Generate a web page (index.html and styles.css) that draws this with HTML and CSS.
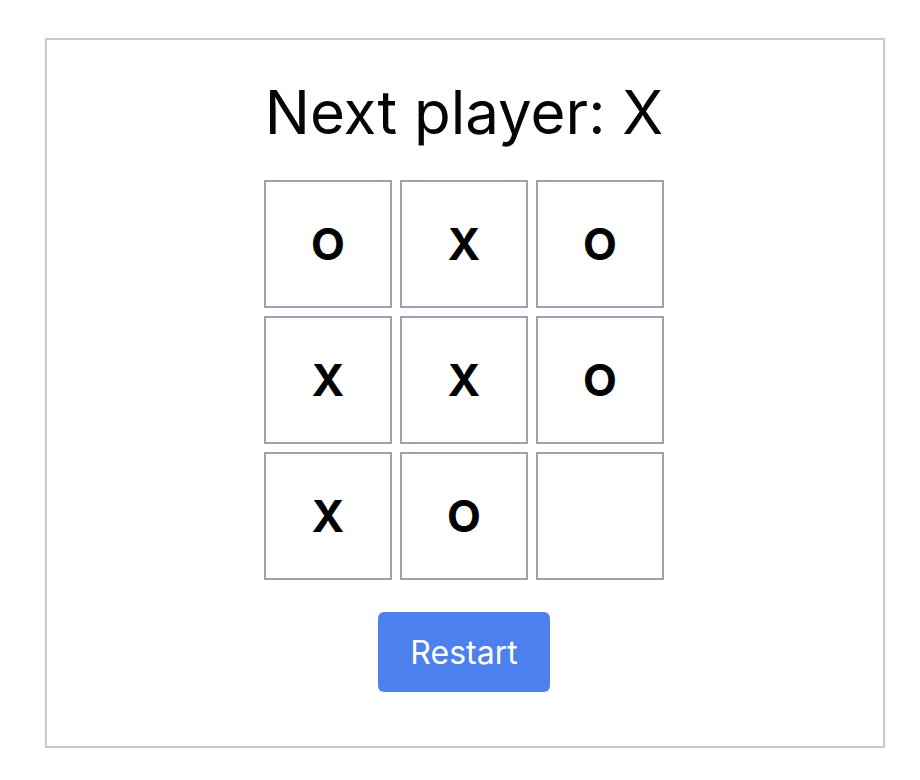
FILE: index.html
```html
<!DOCTYPE html>
<html lang="en">
<head>
<meta charset="utf-8">
<title>Tic Tac Toe</title>
<link rel="stylesheet" href="styles.css">
</head>
<body>
<div class="game">
  <h1 class="status">Next player: X</h1>
  <div class="board">
    <button class="cell">O</button>
    <button class="cell">X</button>
    <button class="cell">O</button>
    <button class="cell">X</button>
    <button class="cell">X</button>
    <button class="cell">O</button>
    <button class="cell">X</button>
    <button class="cell">O</button>
    <button class="cell"></button>
  </div>
  <button class="restart">Restart</button>
</div>
</body>
</html>
```
FILE: styles.css
```css
html, body {
  margin: 0;
  padding: 0;
  background: #ffffff;
}
body {
  font-family: Inter, "Noto Sans", sans-serif;
  color: #000000;
  padding: 38px 0 0 45px;
}
.game {
  box-sizing: border-box;
  width: 840px;
  height: 710px;
  border: 2px solid #c9c9c9;
  box-shadow: 0 1px 4px rgba(0, 0, 0, 0.06);
  padding: 36px 2px 0 0;
  display: flex;
  flex-direction: column;
  align-items: center;
}
.status {
  margin: 0;
  font-size: 60px;
  font-weight: 400;
  line-height: 72px;
  color: #050505;
}
.board {
  margin-top: 32px;
  display: grid;
  grid-template-columns: repeat(3, 128px);
  grid-auto-rows: 128px;
  gap: 8px;
}
.cell {
  box-sizing: border-box;
  border: 2px solid #9ca2ad;
  background: #ffffff;
  font-family: Inter, "Noto Sans", sans-serif;
  font-size: 44px;
  font-weight: 700;
  color: #000000;
  padding: 0;
  margin: 0;
  display: flex;
  align-items: center;
  justify-content: center;
}
.restart {
  margin-top: 32px;
  width: 172px;
  height: 80px;
  border: none;
  border-radius: 6px;
  background: #4d80ef;
  color: #ffffff;
  font-family: Inter, "Noto Sans", sans-serif;
  font-size: 32px;
  font-weight: 400;
  padding: 0;
}
```
